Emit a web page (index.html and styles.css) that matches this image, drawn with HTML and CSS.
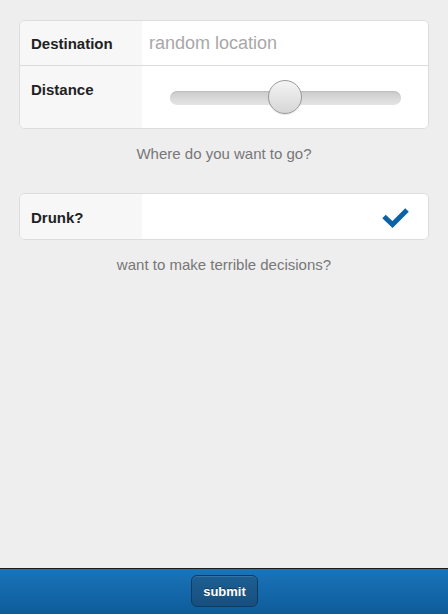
FILE: index.html
```html
<!DOCTYPE html>
<html>
<head>
<meta charset="utf-8">
<link rel="stylesheet" href="styles.css">
</head>
<body>
<main class="content">
  <section class="card">
    <div class="row row-dest">
      <div class="label">Destination</div>
      <div class="value"><span class="placeholder">random location</span></div>
    </div>
    <div class="row row-dist">
      <div class="label">Distance</div>
      <div class="value">
        <div class="slider">
          <div class="track"></div>
          <div class="thumb"></div>
        </div>
      </div>
    </div>
  </section>
  <p class="caption">Where do you want to go?</p>

  <section class="card card-drunk">
    <div class="row row-drunk">
      <div class="label">Drunk?</div>
      <div class="value value-check">
        <svg class="check" width="30" height="22" viewBox="0 0 30 22">
          <path d="M4 10.5 L12.5 18.5 L27 4" fill="none" stroke="#0b62a6" stroke-width="5" stroke-linecap="butt" stroke-linejoin="miter"/>
        </svg>
      </div>
    </div>
  </section>
  <p class="caption">want to make terrible decisions?</p>
</main>
<footer class="footer">
  <button class="submit">submit</button>
</footer>
</body>
</html>
```
FILE: styles.css
```css
html, body {
  margin: 0;
  padding: 0;
}
body {
  background: #eeeeee;
  font-family: "Liberation Sans", Arial, Helvetica, sans-serif;
  height: 100vh;
  display: flex;
  flex-direction: column;
}
.content {
  flex: 1;
  padding: 20px 19px 0 19px;
}
.card {
  background: #fff;
  border: 1px solid #dcdcdc;
  border-radius: 6px;
  overflow: hidden;
}
.card-drunk {
  margin-top: 29px;
}
.row {
  display: grid;
  grid-template-columns: 122px 1fr;
}
.row-dest {
  height: 44px;
  border-bottom: 1px solid #dcdcdc;
}
.row-dist {
  height: 62px;
}
.row-drunk {
  height: 45px;
}
.label {
  background: #f7f7f7;
  color: #222;
  font-weight: bold;
  font-size: 15px;
  line-height: 20px;
  padding-left: 11px;
}
.row-dest .label { padding-top: 13px; }
.row-dist .label { padding-top: 14px; }
.row-drunk .label { padding-top: 14px; }
.value {
  background: #fff;
}
.row-dest .value {
  padding: 11px 0 0 7px;
}
.placeholder {
  font-size: 18px;
  line-height: 22px;
  color: #a8a8a8;
}
.row-dist .value {
  padding: 25px 27px 0 28px;
}
.slider {
  position: relative;
  height: 14px;
}
.track {
  height: 14px;
  border-radius: 7px;
  background: linear-gradient(#cbcbcb, #e4e4e4);
  box-shadow: inset 0 1px 1px rgba(0,0,0,0.08);
}
.thumb {
  position: absolute;
  left: 98px;
  top: -11px;
  width: 32px;
  height: 32px;
  border-radius: 50%;
  border: 1px solid #9a9a9a;
  background: linear-gradient(#f4f4f4, #d6d6d6);
  box-shadow: 0 1px 1px rgba(0,0,0,0.1);
}
.value-check {
  display: flex;
  justify-content: flex-end;
  align-items: flex-start;
  padding: 12px 18px 0 0;
}
.check {
  display: block;
}
.caption {
  margin: 15px 0 0 0;
  text-align: center;
  color: #777;
  font-size: 15px;
  line-height: 20px;
}
.footer {
  box-sizing: border-box;
  height: 46px;
  border-top: 1px solid #1c1c1c;
  background: linear-gradient(#1a74b9, #0e5c9a);
  display: flex;
  justify-content: center;
  align-items: flex-start;
  padding-top: 6px;
}
.submit {
  width: 67px;
  height: 32px;
  border: 1px solid #0d3a62;
  border-radius: 6px;
  background: linear-gradient(#1d5f93, #174f7e);
  box-shadow: inset 0 1px 0 rgba(255,255,255,0.12);
  color: #fff;
  font-family: "Liberation Sans", Arial, Helvetica, sans-serif;
  font-weight: bold;
  font-size: 13px;
  text-shadow: 0 -1px 0 rgba(0,0,0,0.4);
  padding: 0;
  margin-left: 1px;
}
```
